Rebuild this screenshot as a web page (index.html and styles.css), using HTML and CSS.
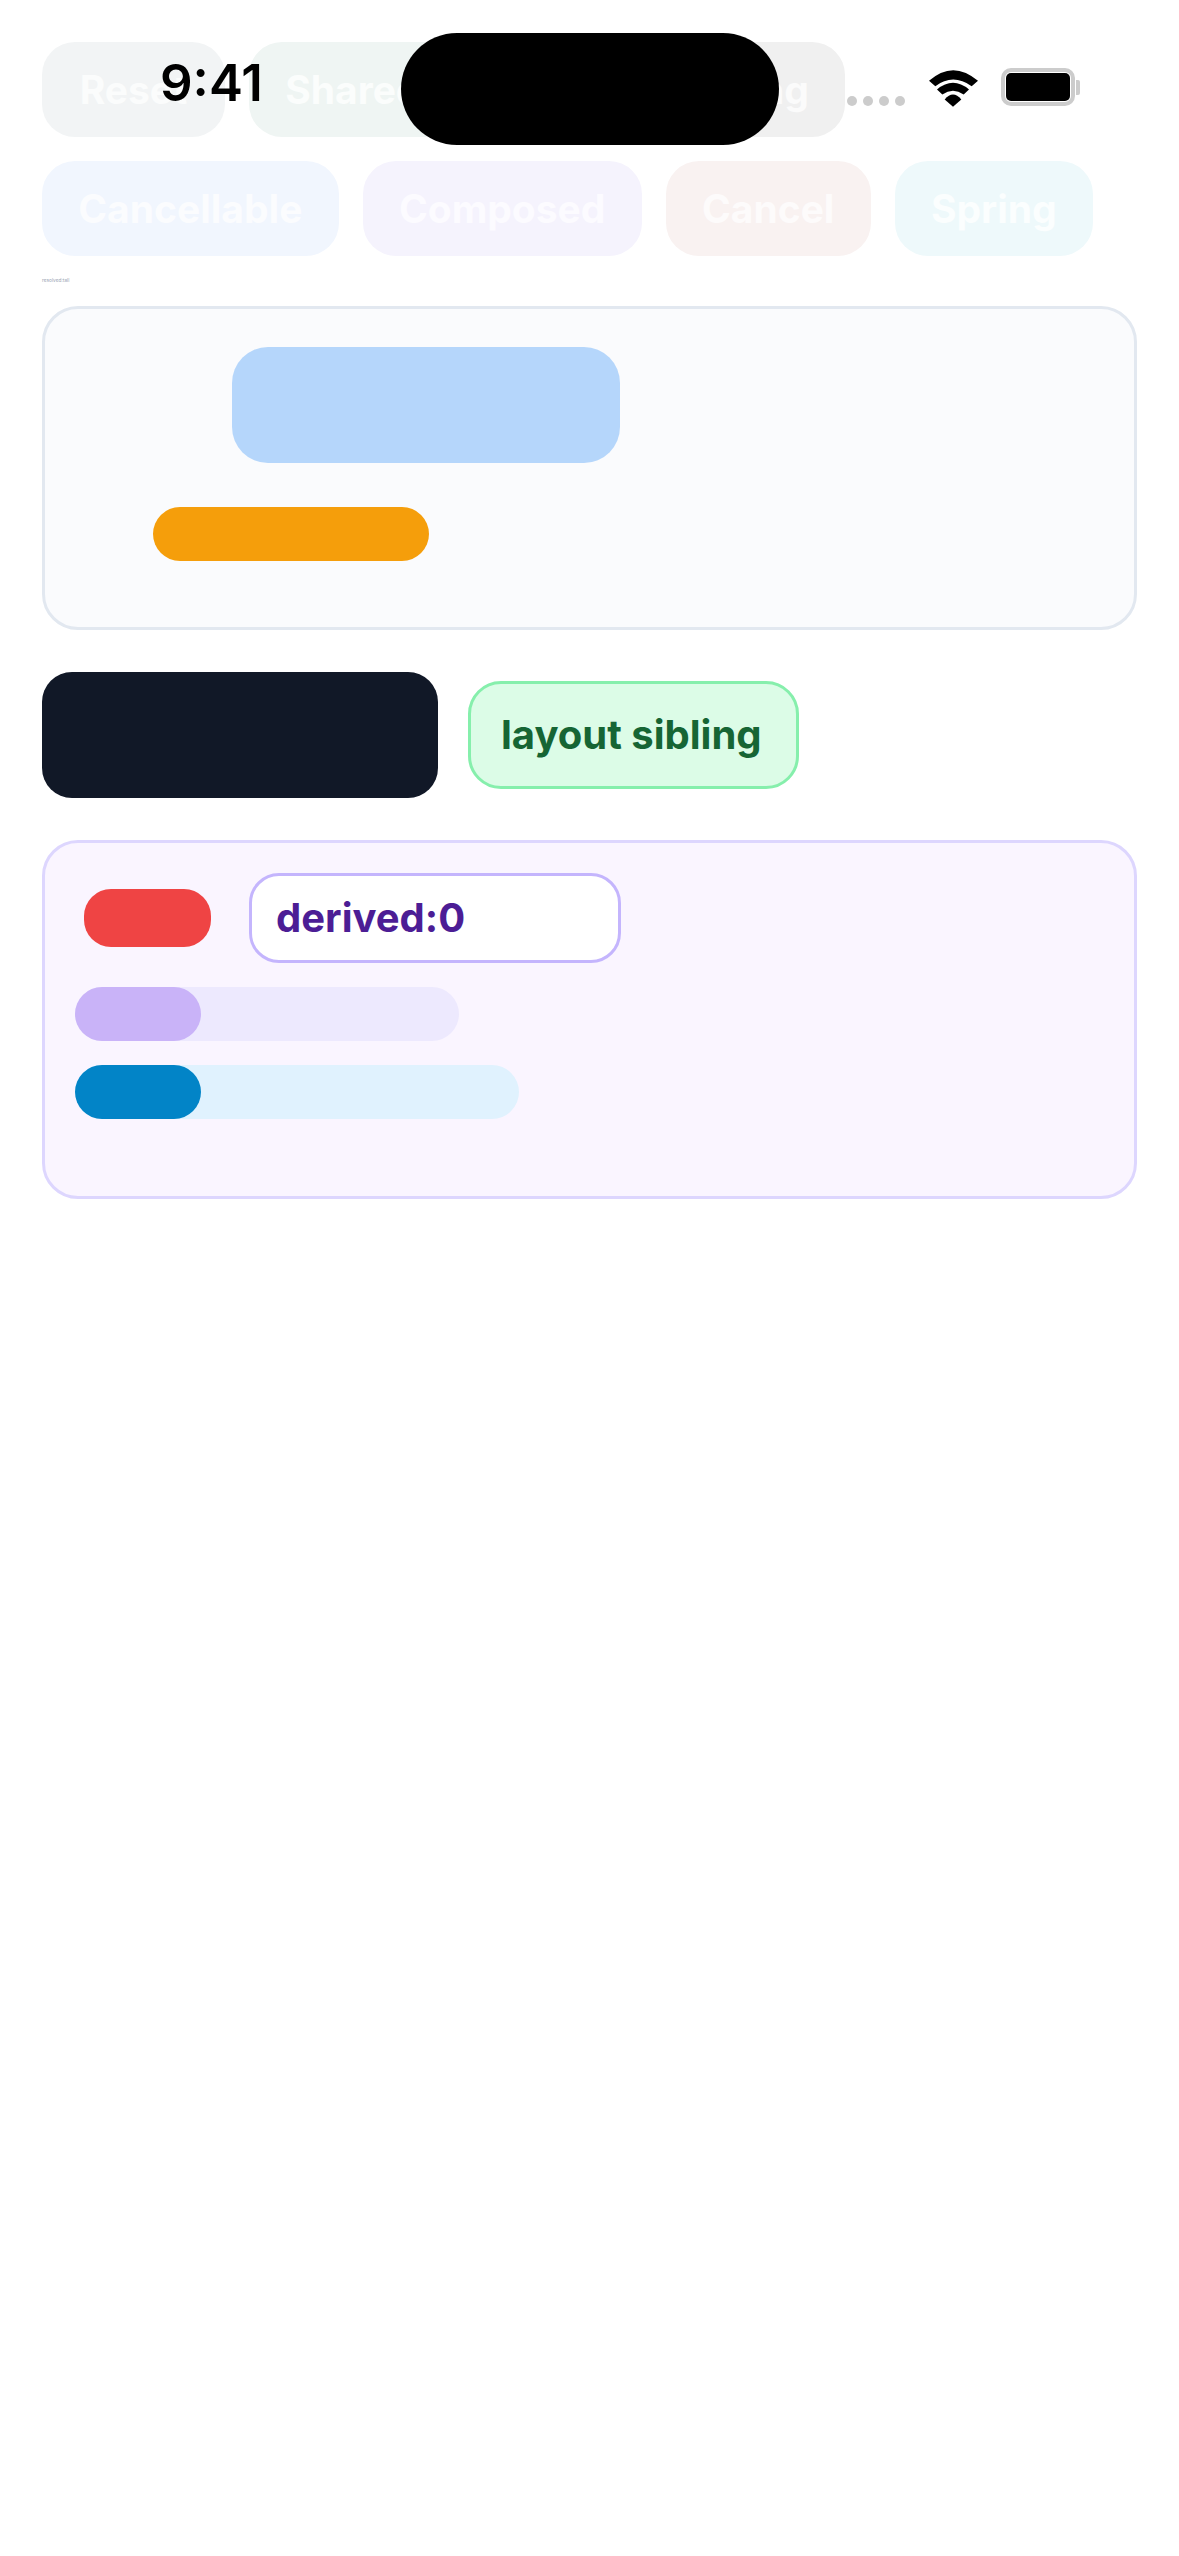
FILE: index.html
```
<!DOCTYPE html>
<html lang="en">
<head>
<meta charset="utf-8">
<title>Animation demo</title>
<link rel="stylesheet" href="styles.css">
</head>
<body>
<main class="page">
  <div class="btn-row">
    <button class="btn btn-slate">Reset</button>
    <button class="btn btn-green">Shared</button>
    <button class="btn btn-gray">Stagger Timing</button>
    <button class="btn btn-blue">Cancellable</button>
    <button class="btn btn-violet">Composed</button>
    <button class="btn btn-red">Cancel</button>
    <button class="btn btn-cyan">Spring</button>
  </div>
  <p class="tiny">resolved:tall</p>
  <section class="stage">
    <div class="blue-box"></div>
    <div class="orange-pill"></div>
  </section>
  <section class="layout-row">
    <div class="dark-box"></div>
    <div class="sibling">layout sibling</div>
  </section>
  <section class="derived-card">
    <div class="derived-row">
      <div class="red-pill"></div>
      <div class="derived">derived:0</div>
    </div>
    <div class="track track-violet"><div class="fill fill-violet"></div></div>
    <div class="track track-sky"><div class="fill fill-sky"></div></div>
  </section>
</main>
<header class="status">
  <span class="time">9:41</span>
  <div class="island"></div>
  <div class="dots"><i></i><i></i><i></i><i></i></div>
  <svg class="wifi" width="49" height="37" viewBox="0 0 147 110"><path d="M0 32Q72-32 147 32L128 48Q72 8 19 48Z"/><path d="M24 58Q72 18 120 58L104 73Q72 51 40 73Z"/><path d="M47 88Q72 58 97 88L72 110Z"/></svg>
  <div class="battery"><div class="battery-level"></div></div>
  <div class="battery-cap"></div>
</header>
</body>
</html>
```
FILE: styles.css
```
* { box-sizing: border-box; }
html, body { margin: 0; padding: 0; background: #fff; }
body { width: 1179px; height: 2556px; position: relative; overflow: hidden; font-family: Inter, "Noto Sans", sans-serif; }
.page { padding: 42px 42px 0; }
.btn-row { display: flex; flex-wrap: wrap; gap: 24px; width: 1095px; }
.btn { height: 95px; padding: 0 36.25px; border: 0; border-radius: 33px; font: 700 39px/1 Inter, sans-serif; color: #fff; }
.btn-slate { min-width: 183px; background: #f2f4f5; color: #fbfcfc; }
.btn-green { background: #eff5f3; color: #fbfdfc; }
.btn-gray { background: #f0f0f0; color: #fbfbfb; }
.btn-blue { background: #f1f6fe; color: #fbfcfe; }
.btn-violet { background: #f5f3fd; color: #fcfbff; }
.btn-red { background: #f9f2f1; color: #fdfbfb; }
.btn-cyan { background: #eef9fb; color: #fbfefe; }
.tiny { margin: 21px 0 0; height: 6px; font-size: 4.8px; line-height: 6px; color: #98a3b3; }
.stage { margin-top: 23px; height: 324px; padding: 38px 0 0 108px; border: 3px solid #e2e8f0; border-radius: 36px; background: #fafbfd; }
.blue-box { width: 388px; height: 116px; margin-left: 79px; border-radius: 36px; background: #b5d6fb; }
.orange-pill { width: 276px; height: 54px; margin-top: 44px; border-radius: 27px; background: #f59e0b; }
.layout-row { display: flex; align-items: center; gap: 30px; margin-top: 42px; }
.dark-box { width: 396px; height: 126px; border-radius: 30px; background: #111827; }
.sibling { width: 331px; height: 108px; padding: 0 0 2px 30px; display: flex; align-items: center; border: 3px solid #86efac; border-radius: 33px; background: #dcfce7; color: #166534; font-size: 40px; font-weight: 700; }
.derived-card { margin-top: 42px; height: 359px; padding: 30px 30px 0; border: 3px solid #ddd6fe; border-radius: 36px; background: #faf5ff; }
.derived-row { display: flex; align-items: center; gap: 38px; padding-left: 9px; }
.red-pill { width: 127px; height: 58px; border-radius: 27px; background: #ef4444; }
.derived { width: 372px; height: 90px; padding: 0 0 2px 24px; display: flex; align-items: center; border: 3px solid #c4b5fd; border-radius: 30px; background: #fff; color: #4c1d95; font-size: 40px; font-weight: 700; }
.track { height: 54px; margin-top: 24px; border-radius: 27px; }
.track-violet { width: 384px; background: #ede9fe; }
.track-sky { width: 444px; background: #e0f2fe; }
.fill { width: 126px; height: 54px; border-radius: 27px; }
.fill-violet { background: #c9b3f8; }
.fill-sky { background: #0284c7; }
.status { position: absolute; inset: 0 0 auto 0; height: 150px; }
.time { position: absolute; left: 160px; top: 52px; font: 600 51px/1.2 Inter, sans-serif; color: #000; }
.island { position: absolute; left: 401px; top: 33px; width: 378px; height: 112px; border-radius: 56px; background: #000; }
.dots { position: absolute; left: 847px; top: 96px; display: flex; gap: 6px; }
.dots i { width: 10px; height: 10px; border-radius: 50%; background: #ccc; }
.wifi { position: absolute; left: 929px; top: 70px; }
.battery { position: absolute; left: 1001px; top: 68px; width: 74px; height: 38px; padding: 1px; border: 4px solid #ccc; border-radius: 10px; background: #fff; }
.battery-level { height: 100%; border-radius: 5px; background: #000; }
.battery-cap { position: absolute; left: 1076px; top: 80px; width: 4px; height: 15px; border-radius: 0 2px 2px 0; background: #ccc; }
```
